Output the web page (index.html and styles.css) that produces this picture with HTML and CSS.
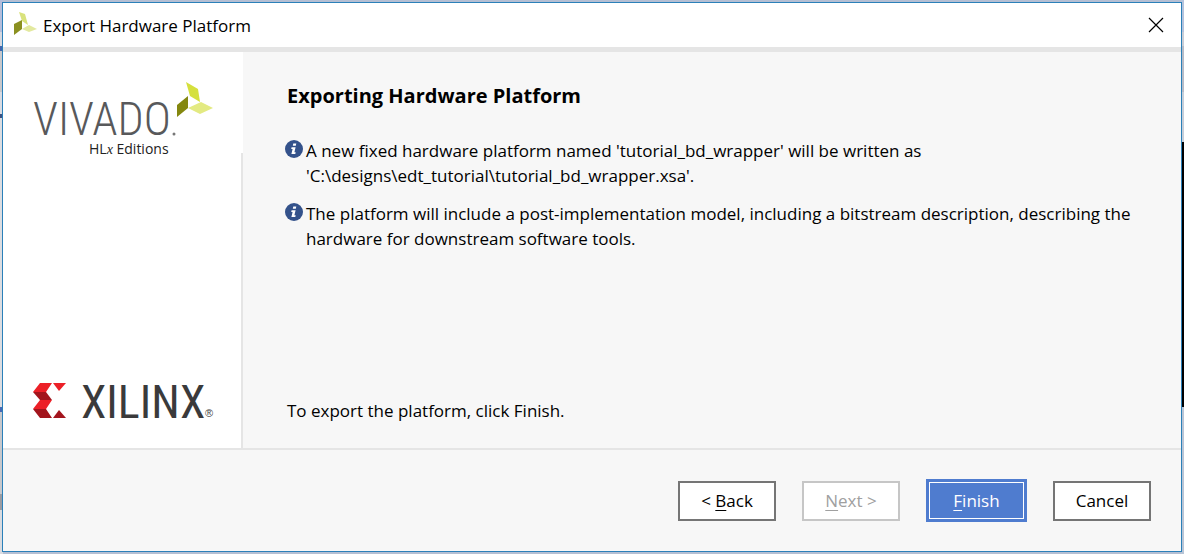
FILE: index.html
```html
<!DOCTYPE html>
<html lang="en">
<head>
<meta charset="utf-8">
<title>Export Hardware Platform</title>
<link rel="stylesheet" href="styles.css">
</head>
<body>
<div class="dialog" role="dialog" aria-labelledby="dialog-title">
  <header class="titlebar">
    <svg class="app-icon" viewBox="0 0 24 24" aria-hidden="true">
      <path fill="#d9e27c" d="M6 0l6 2 3 11-6-4z"/>
      <path fill="#8b9020" d="M1 12l8-4v9l-8 6z"/>
      <path fill="#e3e99f" d="M9 17l7-4 8 4-8 3z"/>
    </svg>
    <span class="title" id="dialog-title">Export Hardware Platform</span>
    <button class="close" type="button" aria-label="Close">
      <svg viewBox="0 0 16 16" aria-hidden="true"><path d="M1 1l14 14M15 1L1 15"/></svg>
    </button>
  </header>
  <div class="content">
    <aside class="sidebar">
      <svg class="vivado" viewBox="0 0 184 80" role="img" aria-label="Vivado HLx Editions">
        <text class="vivado-name" x="0" y="55">VIVADO</text>
        <circle cx="141" cy="54" r="1.500" fill="#777"/>
        <text class="vivado-edition" x="56" y="74">HL<tspan class="vivado-x">x</tspan> Editions</text>
        <path fill="#d5e03d" d="M153 2l12 7 2 13-10-6z"/>
        <path fill="#84870f" d="M144 25l11-9v12l-11 9z"/>
        <path fill="#e3ea82" d="M155 28l13-6 12 6-13 6z"/>
      </svg>
      <svg class="xilinx" viewBox="0 0 184 48" role="img" aria-label="Xilinx">
        <path fill="#ec2027" d="M7 1h12l-6 9H0zM20 1h13l-7 8zM7 18h12l-6 9H0z"/>
        <path fill="#a3151d" d="M0 10h13l6 8H7zM0 27h13l6 9H7zM20 36l6-8 7 8z"/>
        <text class="xilinx-name" x="48" y="36">XILINX</text>
        <text class="xilinx-mark" x="172" y="35">®</text>
      </svg>
    </aside>
    <main class="panel">
      <h1>Exporting Hardware Platform</h1>
      <ul class="notes">
        <li>
          <svg class="info" viewBox="0 0 18 18" aria-hidden="true"><circle cx="9" cy="9" r="9"/><path d="M8.300 3.500h3l-.5 2.200h-3zM6.600 7.200h4l-1.200 5h1.300l-.4 1.800H6.400l1.200-5H6.200z"/></svg>
          <p>A new fixed hardware platform named 'tutorial_bd_wrapper' will be written as<br>'C:\designs\edt_tutorial\tutorial_bd_wrapper.xsa'.</p>
        </li>
        <li>
          <svg class="info" viewBox="0 0 18 18" aria-hidden="true"><circle cx="9" cy="9" r="9"/><path d="M8.300 3.500h3l-.5 2.200h-3zM6.600 7.200h4l-1.200 5h1.300l-.4 1.800H6.400l1.200-5H6.200z"/></svg>
          <p>The platform will include a post-implementation model, including a bitstream description, describing the<br>hardware for downstream software tools.</p>
        </li>
      </ul>
      <p class="hint">To export the platform, click Finish.</p>
    </main>
  </div>
  <footer class="actions">
    <button class="btn" type="button">&lt; <u>B</u>ack</button>
    <button class="btn" type="button" disabled><u>N</u>ext &gt;</button>
    <button class="btn primary" type="button"><u>F</u>inish</button>
    <button class="btn" type="button">Cancel</button>
  </footer>
</div>
</body>
</html>
```
FILE: styles.css
```css
* {
  box-sizing: border-box;
}

body {
  margin: 0;
  padding: 2px;
  min-height: 100vh;
  display: flex;
  font: 17px/25px "Open Sans", "Noto Sans", sans-serif;
  color: #000;
  background:
    linear-gradient(#b4c3dd 0 32px, #c9cdd6 32px 46px, #b6bcc8 46px 92px, #c6ced9 92px 142px, #000 142px 407px, #b9c5d6 407px) right / 3px 100% no-repeat,
    linear-gradient(#b5bedb 0 32px, #d6d8df 32px 46px, #4466ad 46px 51px, #c8c8cb 51px 92px, #d9dbe2 92px 114px, #3c5282 114px 118px, #dcdde1 118px 407px, #466ab6 407px 412px, #c7c8cc 412px 494px, #9b9ca2 494px 510px, #d9dbe0 510px) left / 3px 100% no-repeat,
    #b5bfd3;
}

.dialog {
  flex: 1;
  display: flex;
  flex-direction: column;
  border: 1px solid #2b80b9;
  background: #f7f7f7;
}

.titlebar {
  display: flex;
  align-items: center;
  gap: 6px;
  height: 49px;
  padding: 0 17px 0 10px;
  border-bottom: 5px solid #e5e5e5;
  background: #fff;
}

.app-icon {
  width: 24px;
  height: 24px;
  margin-bottom: 2px;
}

.title {
  flex: 1;
}

.close {
  display: flex;
  padding: 0;
  border: 0;
  background: none;
}

.close svg {
  width: 16px;
  height: 16px;
  stroke: #000;
  stroke-width: 1.2;
}

.content {
  flex: 1;
  display: flex;
  border-bottom: 2px solid #e5e5e5;
}

.sidebar {
  width: 240px;
  display: flex;
  flex-direction: column;
  justify-content: space-between;
  padding: 28px 24px 18px 30px;
  border-right: 2px solid;
  border-image: linear-gradient(#fff 102px, #e5e5e5 102px) 2;
  background: #fff;
}

.vivado {
  width: 184px;
  height: 80px;
}

.vivado-name {
  font: 300 46px "Roboto Condensed", Roboto, sans-serif;
  fill: #58595b;
}

.vivado-edition {
  font: 14px "Open Sans", sans-serif;
  fill: #222;
}

.vivado-x {
  font-family: "Liberation Serif", serif;
  font-style: italic;
}

.xilinx {
  width: 184px;
  height: 48px;
}

.xilinx-name {
  font: 46px "Roboto Condensed", Roboto, sans-serif;
  fill: #3a3a3b;
}

.xilinx-mark {
  font: 11px "Liberation Sans", sans-serif;
  fill: #444;
}

.panel {
  flex: 1;
  display: flex;
  flex-direction: column;
  padding: 31px 40px 25px 44px;
}

h1 {
  margin: 0;
  font-size: 20px;
  line-height: 26px;
}

.notes {
  display: flex;
  flex-direction: column;
  gap: 13px;
  margin: 29px 0 0 -2px;
  padding: 0;
  list-style: none;
}

.notes li {
  display: flex;
  gap: 3px;
}

.notes p,
.hint {
  margin: 0;
}

.info {
  flex: none;
  width: 18px;
  height: 18px;
  margin-top: 2px;
  fill: #34528b;
}

.info path {
  fill: #fff;
}

.hint {
  margin-top: auto;
}

.actions {
  display: flex;
  justify-content: flex-end;
  align-items: center;
  gap: 26px;
  height: 101px;
  padding: 0 30px;
}

.btn {
  width: 98px;
  height: 40px;
  padding: 0;
  border: 2px solid #757575;
  background: #fff;
  font: inherit;
  color: #000;
}

.btn u {
  text-underline-offset: 3px;
}

.btn:disabled {
  border-color: #c6c6c6;
  color: #a0a0a0;
}

.primary {
  width: 101px;
  height: 43px;
  border: 3px solid #4f7ccf;
  background: #4f7ccf;
  box-shadow: inset 0 0 0 1px #fff;
  color: #fff;
}
```
